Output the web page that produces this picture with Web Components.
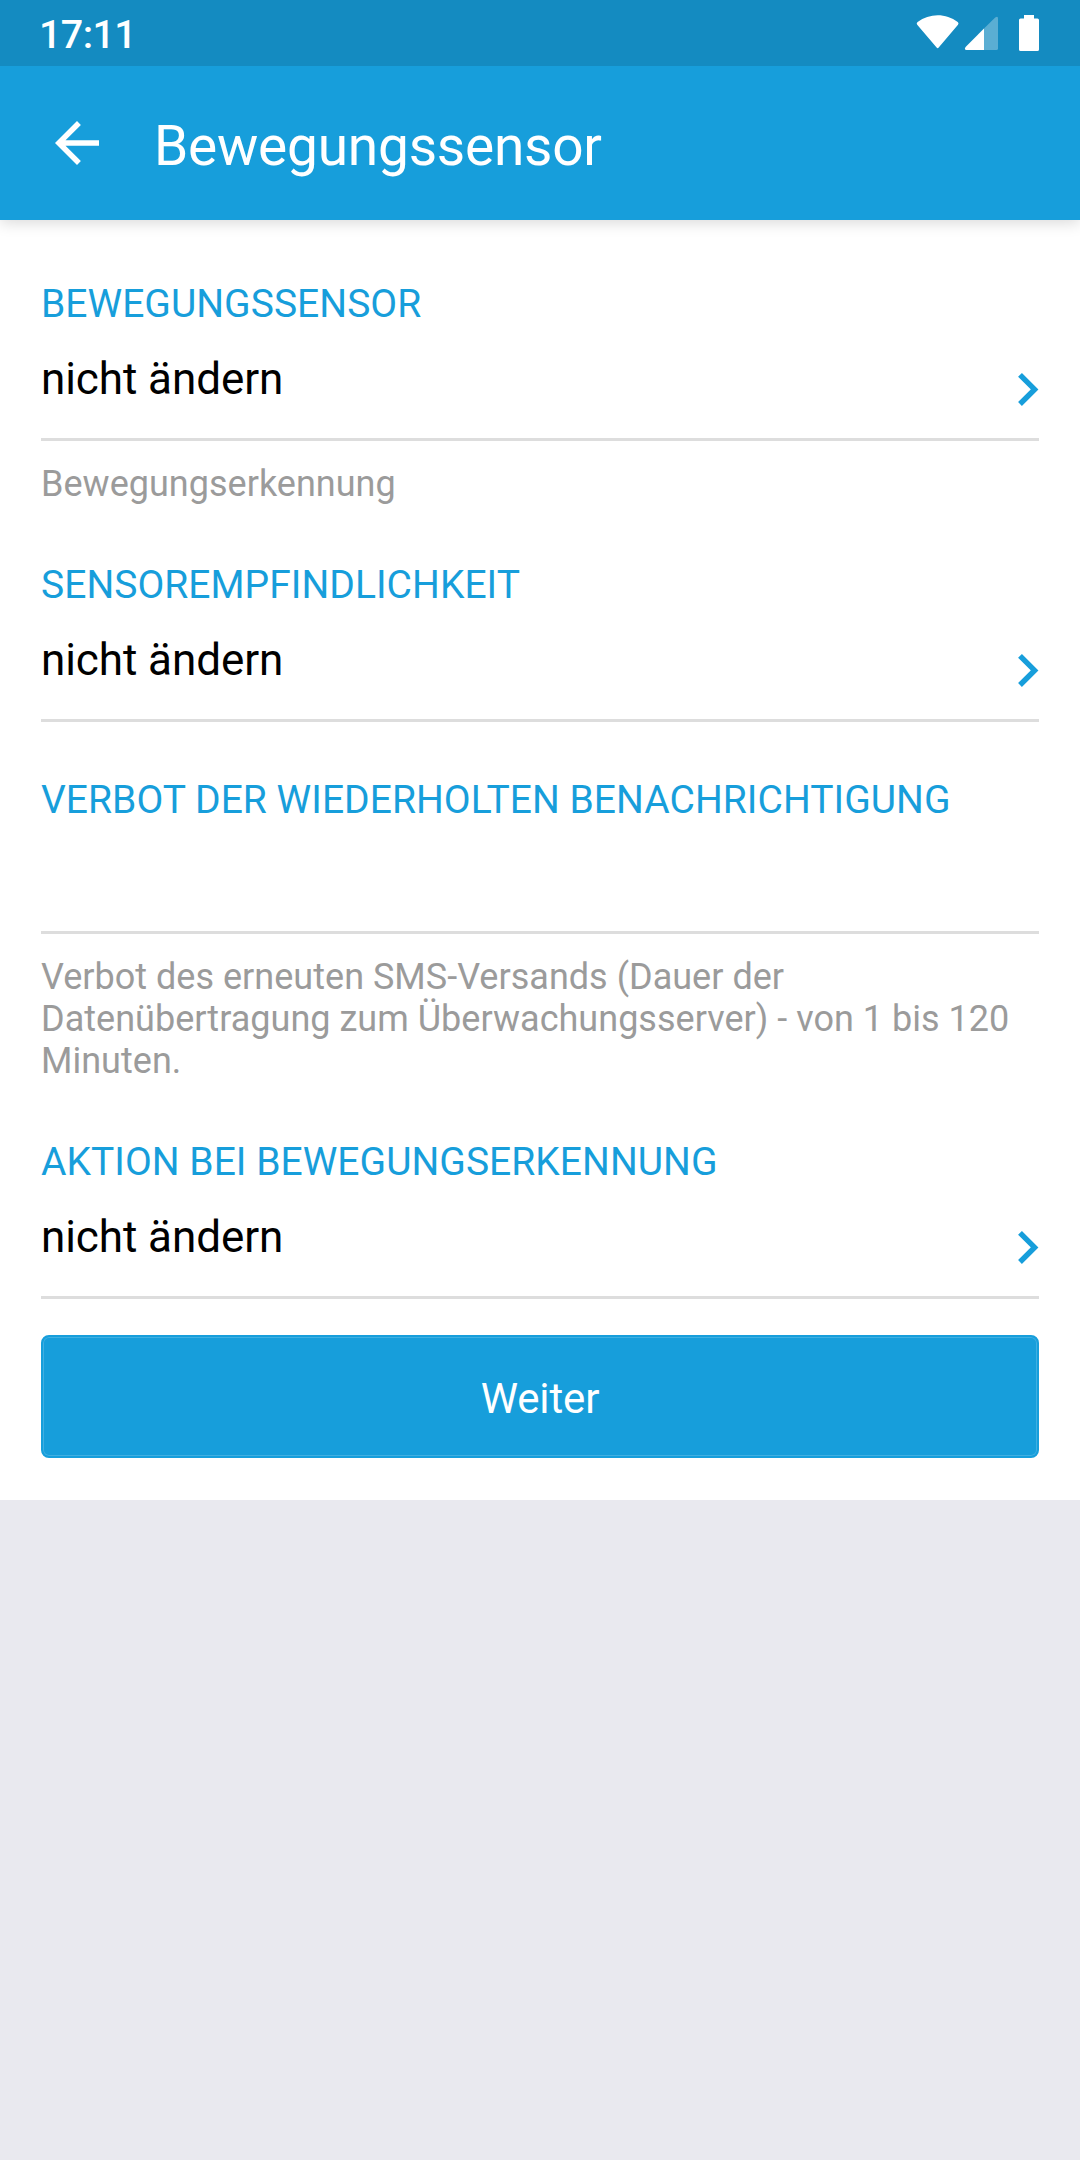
<!DOCTYPE html>
<html lang="de">
<head>
<meta charset="utf-8">
<title>Bewegungssensor</title>
<style>
    :root {
        --primary: #179EDB;
        --primary-dark: #148BC1;
        --surface: #FFFFFF;
        --backdrop: #E9E9EF;
        --divider: #DDDDDD;
        --muted: #9B9B9B;
    }

    body {
        margin: 0;
        min-height: 2160px;
        background: var(--backdrop);
        font-family: Roboto, "Noto Sans", sans-serif;
        color: #000;
    }
</style>
</head>
<body>

<status-bar time="17:11"></status-bar>
<app-bar>Bewegungssensor</app-bar>
<settings-form>
    <form-field label="BEWEGUNGSSENSOR" select>
        nicht ändern
        <span slot="hint">Bewegungserkennung</span>
    </form-field>
    <form-field label="SENSOREMPFINDLICHKEIT" select>nicht ändern</form-field>
    <form-field label="VERBOT DER WIEDERHOLTEN BENACHRICHTIGUNG">
        <span slot="hint">Verbot des erneuten SMS-Versands (Dauer der Datenübertragung zum Überwachungsserver) - von 1 bis 120 Minuten.</span>
    </form-field>
    <form-field label="AKTION BEI BEWEGUNGSERKENNUNG" select>nicht ändern</form-field>
    <primary-button slot="action">Weiter</primary-button>
</settings-form>

<script>
/** <status-bar time="…"> — system clock on the left, wifi / signal / battery on the right. */
class StatusBar extends HTMLElement {
    constructor() {
        super();
        this.attachShadow({ mode: 'open' });
    }

    connectedCallback() {
        this.shadowRoot.innerHTML = `
            <style>
                :host {
                    display: flex;
                    justify-content: space-between;
                    height: 66px;
                    padding: 0 41px 0 39px;
                    box-sizing: border-box;
                    background: var(--primary-dark);
                    color: #fff;
                }
                .time  { font-size: 39.5px; font-weight: 500; line-height: 70px; letter-spacing: -0.6px; }
                .icons { display: flex; }
                svg    { display: block; fill: currentColor; }
            </style>
            <span class="time">${this.getAttribute('time') ?? ''}</span>
            <span class="icons">
                <svg width="124" height="66" viewBox="915 0 124 66">
                    <path d="M936.6 47.6 917.2 24.8Q916 23.2 917.6 22.1C929.5 13 946 13 957.7 22.1Q959.2 23.2 958 24.8L938.7 47.6Q937.6 48.8 936.6 47.6Z"/>
                    <path opacity=".3" d="M984 28.6 995.2 17.6Q998 15.6 998 18.4V48.4Q998 50 996.4 50H984Z"/>
                    <path d="M984 28.6V50H966.4Q963.8 49.6 965.6 47Z"/>
                    <path d="M1024 15H1034V18.4H1037.4Q1039 18.4 1039 20V49.4Q1039 51 1037.4 51H1020.6Q1019 51 1019 49.4V20Q1019 18.4 1020.6 18.4H1024Z"/>
                </svg>
            </span>
        `;
    }
}

/** <app-bar> — back arrow and screen title (slotted). */
class AppBar extends HTMLElement {
    constructor() {
        super();
        this.attachShadow({ mode: 'open' }).innerHTML = `
            <style>
                :host {
                    display: flex;
                    align-items: center;
                    gap: 44px;
                    position: relative;
                    z-index: 1;
                    height: 154px;
                    padding-left: 44px;
                    box-sizing: border-box;
                    background: var(--primary);
                    box-shadow: 0 3px 14px rgba(0, 0, 0, .15);
                    clip-path: inset(0 0 -20px 0);
                    color: #fff;
                }
                svg { display: block; fill: currentColor; }
                h1  { margin: 0; padding-top: 6px; font-size: 55px; font-weight: 400; line-height: 64px; letter-spacing: -0.22px; }
            </style>
            <svg width="66" height="66" viewBox="0 0 24 24">
                <path d="M20 11H7.83l5.59-5.59L12 4l-8 8 8 8 1.41-1.41L7.83 13H20z"/>
            </svg>
            <h1><slot></slot></h1>
        `;
    }
}

/** <settings-form> — white sheet stacking the fields, with a slot for the action button. */
class SettingsForm extends HTMLElement {
    constructor() {
        super();
        this.attachShadow({ mode: 'open' }).innerHTML = `
            <style>
                :host {
                    display: block;
                    padding: 60px 41px 42px;
                    background: var(--surface);
                }
                .fields { display: flex; flex-direction: column; gap: 54px; }
                .action { margin-top: 36px; }
            </style>
            <div class="fields"><slot></slot></div>
            <div class="action"><slot name="action"></slot></div>
        `;
    }
}

/**
 * <form-field label="…" [select]> — caption, value, divider and an optional hint.
 * With `select` the row gets a chevron and the slotted value; without, it is an empty input.
 */
class FormField extends HTMLElement {
    constructor() {
        super();
        this.attachShadow({ mode: 'open' });
    }

    connectedCallback() {
        const select = this.hasAttribute('select');
        this.shadowRoot.innerHTML = `
            <style>
                :host  { display: block; }
                .label {
                    height: 46px;
                    color: var(--primary);
                    font-size: 39px;
                    line-height: 48px;
                    letter-spacing: 0.03px;
                    white-space: nowrap;
                }
                .row {
                    display: flex;
                    justify-content: space-between;
                    align-items: flex-start;
                    height: 112px;
                    padding-top: 27px;
                    box-sizing: border-box;
                    border-bottom: 3px solid var(--divider);
                }
                :host([select]) .row { height: 115px; }
                .value { font-size: 44px; line-height: 52px; letter-spacing: -0.08px; }
                svg    { display: block; margin-top: 18px; fill: none; stroke: var(--primary); stroke-width: 5.4; }
                ::slotted([slot="hint"]) {
                    display: block;
                    padding: 22px 0 2px;
                    color: var(--muted);
                    font-size: 36px;
                    line-height: 42px;
                    letter-spacing: 0.02px;
                }
            </style>
            <div class="label">${this.getAttribute('label') ?? ''}</div>
            <div class="row">
                ${select ? `
                    <span class="value"><slot></slot></span>
                    <svg width="22" height="36" viewBox="0 0 22 36"><path d="M3 3.8 17.6 18.4 3 33"/></svg>
                ` : ''}
            </div>
            <slot name="hint"></slot>
        `;
    }
}

/** <primary-button> — full-width filled button with a faint inner outline. */
class PrimaryButton extends HTMLElement {
    constructor() {
        super();
        this.attachShadow({ mode: 'open' }).innerHTML = `
            <style>
                :host { display: block; }
                button {
                    display: block;
                    width: 100%;
                    height: 123px;
                    padding: 4px 0 0;
                    border: 2px solid var(--primary);
                    border-radius: 8px;
                    background: var(--primary);
                    box-shadow: inset 0 0 0 1px rgba(255, 255, 255, .18);
                    color: #fff;
                    font: 400 42px/50px Roboto, "Noto Sans", sans-serif;
                    letter-spacing: -0.15px;
                }
            </style>
            <button type="button"><slot></slot></button>
        `;
    }
}

customElements.define('status-bar', StatusBar);
customElements.define('app-bar', AppBar);
customElements.define('settings-form', SettingsForm);
customElements.define('form-field', FormField);
customElements.define('primary-button', PrimaryButton);
</script>
</body>
</html>
